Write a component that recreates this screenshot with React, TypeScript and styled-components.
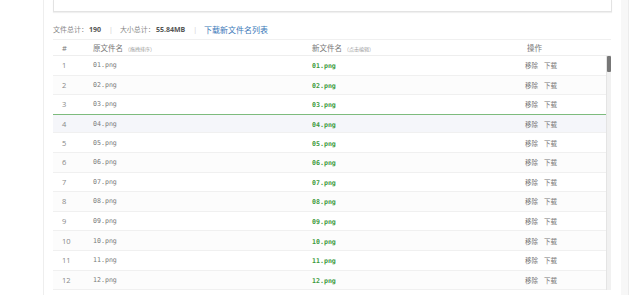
import React from 'react';
import styled, { createGlobalStyle } from 'styled-components';

const files = Array.from({ length: 12 }, (_, i) => {
	const n = String(i + 1).padStart(2, '0');
	return { id: i + 1, oldName: `${n}.png`, newName: `${n}.png` };
});

const App: React.FC = () => {
	return (
		<Page>
			<GlobalStyle />
			<Panel>
				<InputBox />
				<Stats>
					<Label>文件总计：</Label>
					<Num>190</Num>
					<Sep>|</Sep>
					<Label>大小总计：</Label>
					<Num>55.84MB</Num>
					<Sep>|</Sep>
					<Link>下载新文件名列表</Link>
				</Stats>
				<Table>
					<HeadRow>
						<HeadCell>#</HeadCell>
						<HeadCell>
							原文件名 <small>（拖拽排序）</small>
						</HeadCell>
						<HeadCell>
							新文件名 <small>（点击编辑）</small>
						</HeadCell>
						<HeadCell>操作</HeadCell>
					</HeadRow>
					<BodyWrap>
						<Rows>
							{files.map((f) => (
								<Row key={f.id} active={f.id === 4}>
									<Index>{f.id}</Index>
									<OldName>{f.oldName}</OldName>
									<NewName>{f.newName}</NewName>
									<Actions>
										<span>移除</span>
										<span>下载</span>
									</Actions>
								</Row>
							))}
						</Rows>
						<ScrollTrack>
							<ScrollThumb />
						</ScrollTrack>
					</BodyWrap>
				</Table>
			</Panel>
		</Page>
	);
};

export default App;

const GlobalStyle = createGlobalStyle`
	body {
		margin: 0;
		background: #fff;
		font-family: 'Open Sans', 'Noto Sans CJK SC', sans-serif;
	}
`;

const Page = styled.div`
	height: 295px;
	overflow: hidden;
	background: #fff;
`;

const Panel = styled.div`
	margin-left: 43px;
	width: 568px;
	height: 295px;
	padding-left: 9px;
	border-left: 1px solid #eeeeee;
	border-right: 7px solid #f7f7f7;
	box-shadow: 1px 0 0 #ececec;
	box-sizing: content-box;
	overflow: hidden;
`;

const InputBox = styled.div`
	width: 557px;
	height: 11px;
	border: 1px solid #e3e3e3;
	border-top: 0;
	box-shadow: 0 1px 1px rgba(0, 0, 0, 0.06);
	background: #fff;
`;

const Stats = styled.div`
	display: flex;
	align-items: center;
	height: 16px;
	margin-top: 9px;
	font-size: 7px;
	color: #888;
`;

const Label = styled.span`
	color: #8a8a8a;
`;

const Num = styled.span`
	font-weight: 700;
	color: #555;
	margin-left: 1px;
`;

const Sep = styled.span`
	color: #ccc;
	margin: 0 7px 0 8px;
`;

const Link = styled.span`
	color: #3a78b8;
	font-size: 8px;
`;

const Table = styled.div`
	width: 558px;
	margin-top: 2px;
`;

const HeadRow = styled.div`
	display: grid;
	grid-template-columns: 40px 219px 213px 1fr;
	height: 17px;
	align-items: center;
	border-top: 1px solid #f0f0f0;
	border-bottom: 1px solid #eeeeee;
	font-size: 7.5px;
	color: #777;
	box-sizing: border-box;
`;

const HeadCell = styled.div`
	font-family: 'Liberation Serif', 'Noto Sans CJK SC', serif;
	white-space: nowrap;

	&:first-child {
		font-family: 'Open Sans', sans-serif;
		padding-left: 9px;
	}
	&:last-child {
		font-family: 'Open Sans', 'Noto Sans CJK SC', sans-serif;
		margin-left: 2px;
	}

	small {
		font-size: 5px;
		color: #999;
	}
`;

const BodyWrap = styled.div`
	display: flex;
`;

const Rows = styled.div`
	flex: 1;
`;

const Row = styled.div<{ active?: boolean }>`
	display: grid;
	grid-template-columns: 40px 219px 213px 1fr;
	height: 19.6px;
	align-items: center;
	box-sizing: border-box;
	border-bottom: 1px solid #f0f0f0;
	border-top: ${(p) => (p.active ? '1px solid #7dbb7d' : '0')};
	margin-top: ${(p) => (p.active ? '-1px' : '0')};
	background: ${(p) => (p.active ? '#f5f6fa' : '#fff')};

	&:nth-child(even) {
		background: ${(p) => (p.active ? '#f5f6fa' : '#fcfcfc')};
	}
`;

const Index = styled.div`
	font-size: 7.5px;
	color: #888;
	padding-left: 9px;
`;

const OldName = styled.div`
	font-family: 'DejaVu Sans Mono', monospace;
	font-size: 6.6px;
	color: #7a7a7a;
`;

const NewName = styled.div`
	font-family: 'DejaVu Sans Mono', monospace;
	font-size: 6.6px;
	font-weight: 700;
	color: #3d9a3d;
	margin-top: 2px;
`;

const Actions = styled.div`
	display: flex;
	gap: 6px;
	font-size: 6.5px;
	color: #777;
`;

const ScrollTrack = styled.div`
	width: 5px;
	background: #f1f1f1;
	border-left: 1px solid #e4e4e4;
	box-sizing: border-box;
`;

const ScrollThumb = styled.div`
	height: 16px;
	background: #777;
	border-radius: 1px;
`;
